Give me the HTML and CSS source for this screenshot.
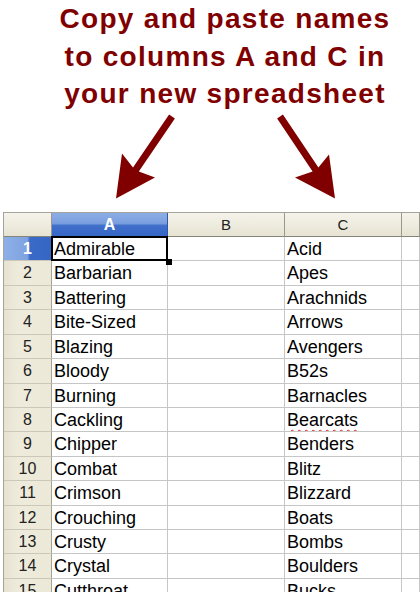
FILE: index.html
```html
<!DOCTYPE html>
<html lang="en">
<head>
  <meta charset="UTF-8">
  <meta name="viewport" content="width=device-width, initial-scale=1.0">
  <title>Copy and paste names</title>
  <link rel="stylesheet" href="styles.css">
</head>
<body>
  <h1 class="title">Copy and paste names<br>to columns A and C in<br>your new spreadsheet</h1>

  <svg class="arrows" width="420" height="99.5" viewBox="0 112.5 420 99.5">
    <polygon points="169.1,114 174.9,118 138.8,170.9 155,177 116,198 122,153 133,166.9" />
    <polygon points="277.1,117.95 282.9,114.05 318.4,167.05 329,154 335,198 295,177 312.6,170.95" />
  </svg>

  <div class="sheet">
    <div class="corner"></div>
    <div class="colhead active">A</div>
    <div class="colhead">B</div>
    <div class="colhead">C</div>
    <div class="colhead"></div>

    <div class="rowhead active">1</div><div class="cell selected">Admirable</div><div class="cell"></div><div class="cell">Acid</div><div class="cell"></div>
    <div class="rowhead">2</div><div class="cell">Barbarian</div><div class="cell"></div><div class="cell">Apes</div><div class="cell"></div>
    <div class="rowhead">3</div><div class="cell">Battering</div><div class="cell"></div><div class="cell">Arachnids</div><div class="cell"></div>
    <div class="rowhead">4</div><div class="cell">Bite-Sized</div><div class="cell"></div><div class="cell">Arrows</div><div class="cell"></div>
    <div class="rowhead">5</div><div class="cell">Blazing</div><div class="cell"></div><div class="cell">Avengers</div><div class="cell"></div>
    <div class="rowhead">6</div><div class="cell">Bloody</div><div class="cell"></div><div class="cell">B52s</div><div class="cell"></div>
    <div class="rowhead">7</div><div class="cell">Burning</div><div class="cell"></div><div class="cell">Barnacles</div><div class="cell"></div>
    <div class="rowhead">8</div><div class="cell">Cackling</div><div class="cell"></div><div class="cell"><span class="misspelt">Bearcats</span></div><div class="cell"></div>
    <div class="rowhead">9</div><div class="cell">Chipper</div><div class="cell"></div><div class="cell">Benders</div><div class="cell"></div>
    <div class="rowhead">10</div><div class="cell">Combat</div><div class="cell"></div><div class="cell">Blitz</div><div class="cell"></div>
    <div class="rowhead">11</div><div class="cell">Crimson</div><div class="cell"></div><div class="cell">Blizzard</div><div class="cell"></div>
    <div class="rowhead">12</div><div class="cell">Crouching</div><div class="cell"></div><div class="cell">Boats</div><div class="cell"></div>
    <div class="rowhead">13</div><div class="cell">Crusty</div><div class="cell"></div><div class="cell">Bombs</div><div class="cell"></div>
    <div class="rowhead">14</div><div class="cell">Crystal</div><div class="cell"></div><div class="cell">Boulders</div><div class="cell"></div>
    <div class="rowhead">15</div><div class="cell">Cutthroat</div><div class="cell"></div><div class="cell">Bucks</div><div class="cell"></div>
  </div>
</body>
</html>
```

FILE: styles.css
```css
html, body {
  margin: 0;
  padding: 0;
  height: 592px;
  overflow: hidden;
  background: #fff;
  font-family: "Liberation Sans", Arial, sans-serif;
}
.title {
  margin: 0;
  padding-left: 30px;
  font-size: 28px;
  font-weight: bold;
  letter-spacing: 1.3px;
  line-height: 37.5px;
  text-align: center;
  color: #800000;
}
.arrows {
  display: block;
}
.arrows polygon {
  fill: #800000;
}
.sheet {
  display: grid;
  grid-template-columns: 48px 116px 117px 117px 1fr;
  grid-template-rows: 24px repeat(15, 24.43px);
  margin-left: 3px;
  border-top: 1px solid #a4a49a;
  border-left: 1px solid #a4a49a;
}
.sheet > div {
  box-sizing: border-box;
  border-right: 1px solid #c6c6c6;
  border-bottom: 1px solid #c6c6c6;
  white-space: nowrap;
  overflow: hidden;
}
.corner,
.colhead {
  background: linear-gradient(#f5f3ea, #eeecdf 50%, #e6e3d2);
  border-right-color: #98988c !important;
  border-bottom-color: #85857a !important;
}
.colhead {
  font-size: 15px;
  line-height: 23px;
  text-align: center;
  color: #222;
}
.colhead.active {
  background: linear-gradient(#8caee6, #7b9fdf 45%, #3f6fca 55%, #3767c6);
  color: #fff;
  font-weight: bold;
  font-size: 16px;
  border-right-color: #2d57a8 !important;
  border-bottom-color: #23499a !important;
}
.rowhead {
  background: linear-gradient(90deg, #e6e3d2, #eeebdc 30%, #ece9d8);
  border-right-color: #a6a396 !important;
  border-bottom-color: #cbc8b9 !important;
  font-size: 16px;
  line-height: 24px;
  text-align: center;
  color: #222;
}
.rowhead.active {
  background: linear-gradient(90deg, #8db0e7, #7ea2e0 50%, #3a6ac7 55%, #3566c4);
  color: #fff;
  font-weight: bold;
}
.cell {
  font-size: 18px;
  line-height: 24px;
  padding-left: 2px;
  color: #000;
}
.cell.selected {
  position: relative;
  overflow: visible !important;
}
.cell.selected::after {
  content: "";
  position: absolute;
  left: -1px;
  top: -1px;
  right: -1px;
  bottom: -1px;
  border: 2px solid #000;
}
.cell.selected::before {
  content: "";
  position: absolute;
  right: -5px;
  bottom: -5px;
  width: 6px;
  height: 6px;
  background: #000;
  z-index: 1;
}
.misspelt {
  text-decoration: underline wavy #e02020;
  text-decoration-thickness: 1px;
  text-underline-offset: 3px;
}
```
